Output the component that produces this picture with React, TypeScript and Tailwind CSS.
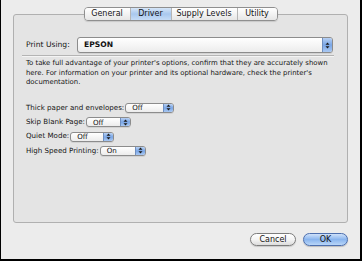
import React from 'react';

const tabs = ['General', 'Driver', 'Supply Levels', 'Utility'];

const options = [
  { label: 'Thick paper and envelopes:', value: 'Off', width: 'w-[49px]' },
  { label: 'Skip Blank Page:', value: 'Off', width: 'w-[45px]' },
  { label: 'Quiet Mode:', value: 'Off', width: 'w-[44px]' },
  { label: 'High Speed Printing:', value: 'On', width: 'w-[46px]' },
];

const Arrows = () => (
  <svg width="5" height="7" viewBox="0 0 5 7">
    <path d="M2.5 0.5 L4.5 2.8 L0.5 2.8 Z" fill="#1a1a1a" />
    <path d="M2.5 6.5 L4.5 4.2 L0.5 4.2 Z" fill="#1a1a1a" />
  </svg>
);

const Popup = ({ value, className, bold }: { value: string; className: string; bold?: boolean }) => (
  <div
    className={`${className} flex items-stretch rounded-[3px] border border-[#8c8c8c] bg-gradient-to-b from-white to-[#ececec] shadow-[0_1px_0_rgba(0,0,0,0.08)] overflow-hidden`}
  >
    <span className={`flex-1 pl-[6px] leading-none flex items-center text-[#111] ${bold ? 'font-bold' : ''}`}>
      {value}
    </span>
    <span className="w-[10px] flex items-center justify-center bg-gradient-to-b from-[#b7d0f3] via-[#7aa6e6] to-[#a9c8f2] border-l border-[#6f8fc0]">
      <Arrows />
    </span>
  </div>
);

export default function App() {
  return (
    <div className="w-[362px] h-[261px] bg-[#ececec] border-l border-r-2 border-b-2 border-black flex flex-col font-['DejaVu_Sans',sans-serif] text-[#141414]">
      {/* tabs */}
      <div className="relative z-10 flex justify-center pt-[7px]">
        <div className="flex h-[14px] rounded-[4px] border border-[#8f8f8f] overflow-hidden shadow-[0_1px_1px_rgba(0,0,0,0.12)] text-[8px]">
          {tabs.map((t, i) => (
            <div
              key={t}
              className={`flex items-center justify-center ${
                ['w-[45px]', 'w-[41px]', 'w-[66px]', 'w-[40px]'][i]
              } ${i > 0 ? 'border-l border-[#b5b5b5]' : ''} ${
                t === 'Driver'
                  ? 'bg-gradient-to-b from-[#d6e6f8] via-[#a9c8ee] to-[#c6dcf6]'
                  : 'bg-gradient-to-b from-white via-[#f3f3f3] to-[#e6e6e6]'
              }`}
            >
              {t}
            </div>
          ))}
        </div>
      </div>

      {/* panel */}
      <div className="ml-[12px] w-[335px] -mt-[7px] h-[209px] bg-[#e4e4e4] border border-[#b0b0b0] rounded-[3px] pl-[8px] pr-[13px] pt-[22px] text-[6.9px]">
        <div className="flex items-center h-[16px] pl-[4px] pr-[1px] text-[7.6px]">
          <span className="w-[51px]">Print Using:</span>
          <Popup value="EPSON" className="flex-1 h-[16px]" bold />
        </div>
        <div className="mt-[2px] border-t border-[#b4b4b4] border-b border-b-[#f4f4f4]" />
        <p className="mt-[2px] pl-[4px] leading-[9.6px]">
          To take full advantage of your printer's options, confirm that they are accurately shown
          here. For information on your printer and its optional hardware, check the printer's
          documentation.
        </p>
        <div className="mt-[13px] pl-[4px] flex flex-col text-[7.1px]">
          {options.map((o) => (
            <div key={o.label} className="flex items-center h-[14.3px] gap-[1px]">
              <span>{o.label}</span>
              <Popup value={o.value} className={`${o.width} h-[10px]`} />
            </div>
          ))}
        </div>
      </div>

      {/* buttons */}
      <div className="flex justify-end gap-[7px] pr-[12px] pt-[10px] text-[8px]">
        <button className="w-[46px] h-[13px] rounded-full border border-[#7c7c7c] bg-gradient-to-b from-white via-[#f4f4f4] to-[#dcdcdc] flex items-center justify-center leading-none shadow-[0_1px_1px_rgba(0,0,0,0.15)]">
          Cancel
        </button>
        <button className="w-[45px] h-[13px] rounded-full border border-[#4d6fae] bg-gradient-to-b from-[#cfe1f9] via-[#8ab5ee] to-[#b9d6f8] flex items-center justify-center leading-none shadow-[0_1px_1px_rgba(0,0,0,0.2)]">
          OK
        </button>
      </div>
    </div>
  );
}
